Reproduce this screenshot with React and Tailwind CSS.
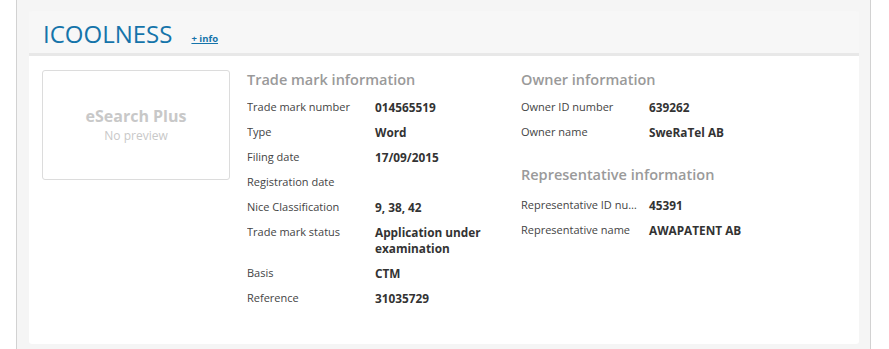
const TRADE_MARK = [
  ['Trade mark number', '014565519'],
  ['Type', 'Word'],
  ['Filing date', '17/09/2015'],
  ['Registration date', ''],
  ['Nice Classification', '9, 38, 42'],
  ['Trade mark status', 'Application under examination'],
  ['Basis', 'CTM'],
  ['Reference', '31035729'],
];

const OWNER = [
  ['Owner ID number', '639262'],
  ['Owner name', 'SweRaTel AB'],
];

const REPRESENTATIVE = [
  ['Representative ID number', '45391'],
  ['Representative name', 'AWAPATENT AB'],
];

function Row({ label, value }) {
  return (
    <div className="flex pb-[9px] leading-4">
      <div className="w-[128px] shrink-0 pr-[4px] truncate text-[11px] text-[#444]">{label}</div>
      <div className="w-[130px] text-[11.8px] font-bold text-[#333]">{value}</div>
    </div>
  );
}

function Heading({ children, className = 'mb-[9px]' }) {
  return <div className={`text-[14.5px] leading-5 font-semibold text-[#9a9a9a] ${className}`}>{children}</div>;
}

export default function App() {
  return (
    <div className="h-[349px] bg-white pl-4 pr-[18px] font-['Open_Sans',sans-serif]">
      <div className="h-full bg-[#f5f5f5] border-x border-[#d2d2d2] pl-3 pr-[11px] pt-[11px]">
        <div className="rounded-[3px] overflow-hidden">
          <div className="h-[45px] bg-[#f7f7f7] border-b-[3px] border-[#e8e8e8] flex items-end pl-[14px] pb-[3px]">
            <h1 className="text-[24px] leading-8 text-[#1574aa]">ICOOLNESS</h1>
            <a href="#" className="ml-[19px] mb-[3px] text-[9.5px] font-bold text-[#1574aa] underline leading-4">+ info</a>
          </div>
          <div className="h-[288px] bg-white flex pl-[13px] pt-[14px]">
            <div className="w-[188px] h-[110px] border border-[#dcdcdc] rounded-[3px] flex flex-col items-center justify-center text-[#c8c8c8]">
              <div className="text-[16px] font-bold leading-5">eSearch Plus</div>
              <div className="text-[12px] leading-4 mt-[2px]">No preview</div>
            </div>
            <div className="w-[274px] ml-[17px]">
              <Heading>Trade mark information</Heading>
              {TRADE_MARK.map(([l, v]) => <Row key={l} label={l} value={v} />)}
            </div>
            <div className="w-[300px]">
              <Heading>Owner information</Heading>
              {OWNER.map(([l, v]) => <Row key={l} label={l} value={v} />)}
              <div className="mt-[16px]">
                <Heading className="mb-[12px]">Representative information</Heading>
                {REPRESENTATIVE.map(([l, v]) => <Row key={l} label={l} value={v} />)}
              </div>
            </div>
          </div>
        </div>
      </div>
    </div>
  );
}
